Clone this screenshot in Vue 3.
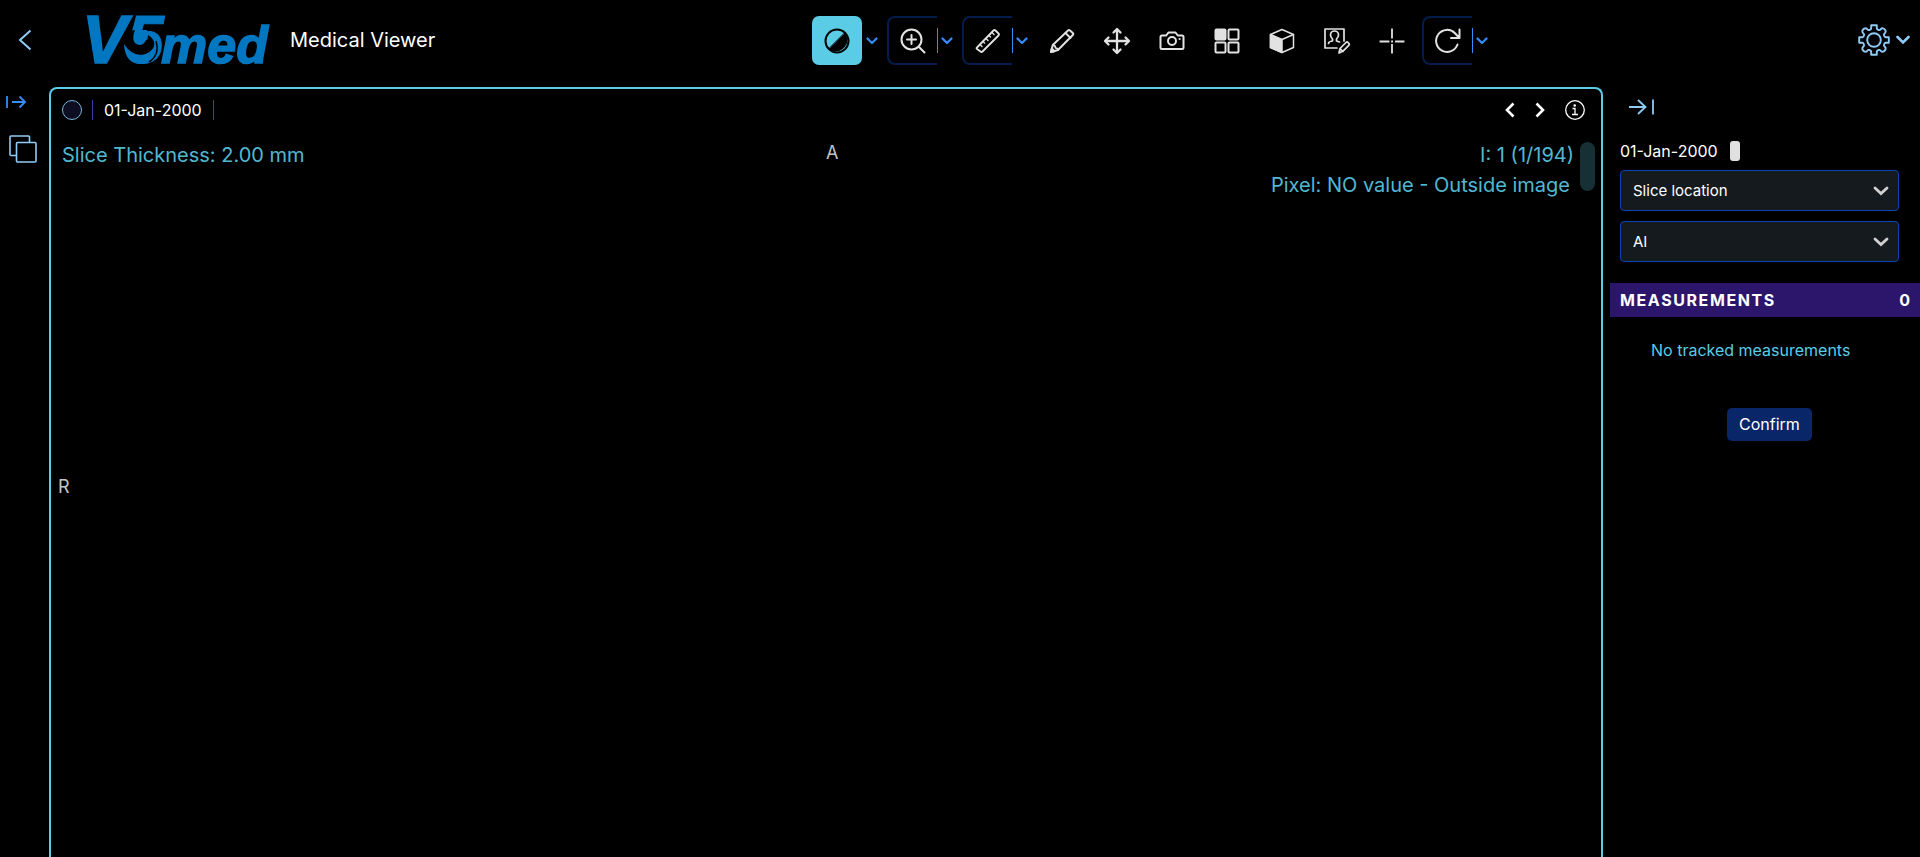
<script setup>
import { ref } from 'vue'

const active = ref('window')
const tools = [
  { id: 'window', label: 'Window level', menu: true },
  { id: 'zoom', label: 'Zoom', menu: true, split: true },
  { id: 'measure', label: 'Measure', menu: true, split: true },
  { id: 'pencil', label: 'Annotate' },
  { id: 'pan', label: 'Pan' },
  { id: 'camera', label: 'Capture' },
  { id: 'layout', label: 'Layout' },
  { id: 'cube', label: 'MPR' },
  { id: 'report', label: 'Report' },
  { id: 'cross', label: 'Crosshairs' },
  { id: 'reset', label: 'Reset', menu: true, split: true }
]
const filters = [
  { id: 'slice', label: 'Series order', value: 'Slice location' },
  { id: 'ai', label: 'Analysis', value: 'AI' }
]
</script>

<template>
  <div class="app">
    <header class="topbar">
      <div class="brand">
        <button class="plain back" aria-label="Back">
          <svg width="16" height="24" viewBox="0 0 16 24"><path d="M12.500 2.500 2 12l10.500 9.500" stroke="#8fcbf7" stroke-width="2" fill="none" /></svg>
        </button>
        <svg class="logo" width="196" height="80" viewBox="-8 -14 196 80">
          <g fill="#0277c1" font-family="Liberation Sans, sans-serif" font-weight="bold" font-style="italic">
            <g stroke="#0277c1" stroke-width="1.500">
              <text x="-6" y="49" font-size="68">V</text>
              <text x="73" y="49" font-size="52">med</text>
            </g>
            <text x="38" y="49" font-size="68" stroke="#0277c1" stroke-width="1">5</text>
          </g>
          <path d="M34 23Q40 16 49 16Q45 29 52 31Q60 30 60 21Q70 27 64 37Q56 45 44 42Q35 37 34 23Z" fill="#000" />
          <path d="M47 16H59Q60 29 53 31Q43 31 46 19Z" fill="#0277c1" />
          <path d="M36 30Q37 51 55 50Q66 49 68 30Q63 40 53 41Q43 41 36 30Z" fill="#0277c1" />
          <path d="M61 48Q72 41 68 27" fill="none" stroke="#000" stroke-width="1.500" />
        </svg>
        <h1>Medical Viewer</h1>
      </div>

      <nav class="toolbar" aria-label="Tools">
        <div v-for="t in tools" :key="t.id" class="group">
          <button class="plain tool" :class="{ on: active === t.id, split: t.split }" :aria-label="t.label" @click="active = t.id">
            <svg width="28" height="28" viewBox="0 0 28 28" fill="none" stroke="currentColor" stroke-width="2" stroke-linecap="round" stroke-linejoin="round">
              <template v-if="t.id === 'window'">
                <circle cx="14" cy="14" r="11.500" />
                <path d="M22 6A11.500 11.500 0 0 1 6 22Z" fill="currentColor" stroke-width="1" />
              </template>
              <template v-else-if="t.id === 'zoom'">
                <circle cx="12.500" cy="12.500" r="10" /><path d="M12.500 8v9M8 12.500h9M20 20l5.500 5.500" />
              </template>
              <template v-else-if="t.id === 'measure'">
                <path d="M3 20.500 19.500 3.500q1-1 2 0l3 3q1 1 0 2L8.500 24.500q-1 1-2 0L3 22q-1-.7 0-1.500Z" stroke-width="1.800" />
                <path d="m6 17.500 2 2M9 14.500l1.500 1.500M12 11.500l2 2M15 8.500l1.500 1.500M18 5.500l2 2" stroke-width="1.400" />
              </template>
              <template v-else-if="t.id === 'pencil'">
                <path d="m3 25 1.800-7L20 3.500q1-1 2 0L24.800 6q1 1 0 2L10 23Z" />
                <path d="m17.500 6 5 5M4.800 18l2 .8.8 2.200 1.800.5.600 1.500" stroke-width="1.800" /><path d="m3 25 .8-3.500 2.700 2.700Z" fill="currentColor" />
              </template>
              <template v-else-if="t.id === 'pan'">
                <path d="M14 3v22M3 14h22" stroke-width="2.300" /><path d="m10.500 5.500 3.500-3.500 3.500 3.500M10.500 22.500 14 26l3.500-3.500M5.500 10.500 2 14l3.500 3.500M22.500 10.500 26 14l-3.500 3.500" stroke-width="2.300" />
              </template>
              <template v-else-if="t.id === 'camera'">
                <path d="M4 8.500h4.200L10.500 5.500h7L19.800 8.500H24q1.500 0 1.500 1.500v10.500q0 1.500-1.500 1.500H4q-1.500 0-1.500-1.500V10q0-1.500 1.500-1.500Z" />
                <circle cx="14" cy="14" r="4" /><path d="M21.500 12h.1" />
              </template>
              <template v-else-if="t.id === 'layout'">
                <rect x="2.500" y="2.500" width="10" height="10" rx="1" fill="currentColor" />
                <rect x="15.500" y="2.500" width="10" height="10" rx="1" />
                <rect x="2.500" y="15.500" width="10" height="10" rx="1" />
                <rect x="15.500" y="15.500" width="10" height="10" rx="1" />
              </template>
              <template v-else-if="t.id === 'cube'">
                <path d="M14 2.500 25.500 7.500v13L14 25.500 2.500 20.500v-13Z" stroke-width="1.500" />
                <path d="M14 12.500v13L2.500 20.500v-13Z" fill="currentColor" stroke-width="1.500" /><path d="m14 12.500 11.500-5" stroke-width="1.500" />
              </template>
              <template v-else-if="t.id === 'report'">
                <g stroke-width="1.700">
                  <path d="M14 21H2V2h19v12" />
                  <path d="M5.500 16.500q0-2 4-2.500v-2Q7.500 10 7.500 8a4 4 0 0 1 8 0q0 2-2 4v2l3 1" />
                  <path d="m16 26 1-4.500 6-6q1-1 2 0l.8.8q1 1 0 2l-6 6ZM17 21.500l3 3" />
                </g>
              </template>
              <template v-else-if="t.id === 'cross'">
                <path d="M14 2.500v8M14 18v7.500M2.500 14.500h8M18 14.500h7.500M14 14.500h.1" stroke-width="1.800" stroke-linecap="square" />
              </template>
              <template v-else>
                <path d="M23.500 17.500A11 11 0 1 1 21 6.200l4 4.300M25.500 2.500v8.500H17" />
              </template>
            </svg>
          </button>
          <button v-if="t.menu" class="plain caret" :class="{ line: t.split }" :aria-label="t.label + ' options'">
            <svg width="12" height="8" viewBox="0 0 12 8"><path d="m1.500 1.500 4.500 4.500 4.500-4.500" fill="none" stroke="#348cfd" stroke-width="2.200" stroke-linecap="round" stroke-linejoin="round" /></svg>
          </button>
        </div>
      </nav>

      <button class="plain settings" aria-label="Settings">
        <svg width="32" height="32" viewBox="-16 -16 32 32" fill="none" stroke="#8fcbf7" stroke-width="1.900" stroke-linejoin="round">
          <circle r="6.800" />
          <path d="M-2.800-14.800H2.800V-11.500Q3-10.500 4.500-10Q5.800-9.500 6.800-10.800Q8-12.200 9.500-11.500Q11-10.800 11.500-9.500Q12.200-8 10.800-6.800Q9.500-5.800 10-4.500Q10.500-3 11.500-2.800H14.800V2.800H11.500Q10.500 3 10 4.500Q9.500 5.800 10.800 6.800Q12.200 8 11.500 9.500Q10.800 11 9.500 11.500Q8 12.200 6.800 10.800Q5.800 9.500 4.500 10Q3 10.500 2.800 11.500V14.800H-2.800V11.500Q-3 10.500-4.500 10Q-5.800 9.500-6.800 10.800Q-8 12.200-9.500 11.500Q-10.800 11-11.500 9.500Q-12.200 8-10.800 6.800Q-9.500 5.800-10 4.500Q-10.500 3-11.500 2.800H-14.800V-2.800H-11.500Q-10.500-3-10-4.500Q-9.500-5.800-10.800-6.800Q-12.200-8-11.500-9.500Q-10.800-11-9.500-11.500Q-8-12.200-6.800-10.800Q-5.800-9.500-4.500-10Q-3-10.500-2.800-11.500Z" />
        </svg>
        <svg width="14" height="10" viewBox="0 0 14 10"><path d="m1.500 2 5.500 5.500L12.500 2" fill="none" stroke="#8fcbf7" stroke-width="2.600" stroke-linecap="round" /></svg>
      </button>
    </header>

    <div class="body">
      <aside class="rail">
        <button class="plain" aria-label="Expand studies">
          <svg width="22" height="14" viewBox="0 0 22 14"><path d="M2 1v12M7 7h13M14.500 1.500 20 7l-5.500 5.500" fill="none" stroke="#348cfd" stroke-width="1.800" /></svg>
        </button>
        <button class="plain stack" aria-label="Studies">
          <svg width="28" height="28" viewBox="0 0 28 28" fill="none" stroke="#8fcbf7" stroke-width="1.600"><path d="M7.500 20.500H2q-1 0-1-1V2q0-1 1-1h17.500q1 0 1 1v5.500" /><rect x="7.500" y="7.500" width="19.500" height="19.500" rx="1" /></svg>
        </button>
      </aside>

      <main class="viewport">
        <div class="viewbar">
          <span class="status"></span>
          <span class="date">01-Jan-2000</span>
          <div class="viewnav">
            <button class="plain" aria-label="Previous"><svg width="12" height="16" viewBox="0 0 12 16"><path d="M9.500 1.500 3 8l6.500 6.500" fill="none" stroke="#fff" stroke-width="2.600" /></svg></button>
            <button class="plain" aria-label="Next"><svg width="12" height="16" viewBox="0 0 12 16"><path d="M2.500 1.500 9 8l-6.500 6.500" fill="none" stroke="#fff" stroke-width="2.600" /></svg></button>
            <button class="plain" aria-label="Information"><svg width="22" height="22" viewBox="0 0 22 22" fill="none" stroke="#fff" stroke-width="1.300"><circle cx="11" cy="11" r="9.300" /><path d="M8.500 9.500H11V15.500M8 15.500h6" /><circle cx="10.700" cy="6.500" r=".7" fill="#fff" /></svg></button>
          </div>
        </div>
        <div class="image">
          <p>Slice Thickness: 2.00 mm</p>
          <div class="right">
            <p class="index">I: 1 (1/194)</p>
            <p>Pixel: NO value - Outside image</p>
          </div>
          <div class="scroll"></div>
          <span class="mark top">A</span>
          <span class="mark left">R</span>
        </div>
      </main>

      <aside class="panel">
        <button class="plain collapse" aria-label="Collapse panel">
          <svg width="28" height="18" viewBox="0 0 28 18"><path d="M1 9h17M10 2l7.500 7-7.500 7M25 1.500v15" fill="none" stroke="#8fcbf7" stroke-width="1.800" /></svg>
        </button>
        <div class="study"><span>01-Jan-2000</span><span class="chip"></span></div>
        <div v-for="f in filters" :key="f.id" class="field">
          <select :id="f.id" :aria-label="f.label"><option>{{ f.value }}</option></select>
          <svg width="16" height="10" viewBox="0 0 16 10"><path d="M2 2l6 5.500L14 2" fill="none" stroke="#d0d0d0" stroke-width="2.800" stroke-linecap="round" /></svg>
        </div>
        <h2><span>MEASUREMENTS</span><span>0</span></h2>
        <p class="empty">No tracked measurements</p>
        <button class="confirm">Confirm</button>
      </aside>
    </div>
  </div>
</template>

<style>
body { background: #000; }
</style>

<style scoped>
* { box-sizing: border-box; }
.app {
  display: flex;
  flex-direction: column;
  min-height: 100vh;
  background: #000;
  color: #fff;
  font-family: Inter, "Liberation Sans", sans-serif;
  font-size: 16px;
  line-height: 24px;
}
h1, h2, p { margin: 0; font-weight: 400; }
svg { display: block; flex: none; }
.plain {
  padding: 0;
  border: 0;
  background: none;
  color: inherit;
  cursor: pointer;
}
.topbar {
  display: flex;
  align-items: center;
  justify-content: space-between;
  height: 81px;
  padding: 0 10px 1px 18px;
}
.brand { display: flex; align-items: center; width: 427px; }
.logo { margin-left: 46px; }
h1 { margin-left: 14px; font-size: 20px; line-height: 28px; white-space: nowrap; }
.toolbar { display: flex; gap: 5px; padding-top: 1px; }
.group { display: flex; align-items: center; }
.tool {
  display: flex;
  align-items: center;
  justify-content: center;
  width: 50px;
  height: 49px;
  color: #e2e2e2;
}
.tool.on { border-radius: 7px; background: #5acce6; color: #000; }
.tool.split:not(.on) {
  border: 2px solid #041c4a;
  border-right: 0;
  border-radius: 8px 0 0 8px;
}
.caret {
  display: flex;
  align-items: center;
  justify-content: center;
  width: 20px;
  height: 25px;
}
.caret.line { border-left: 1px solid #348cfd; }
.settings { display: flex; align-items: center; gap: 6px; }
.body { display: flex; flex: 1; }
.rail {
  display: flex;
  flex-direction: column;
  gap: 26px;
  width: 49px;
  padding: 14px 0 0 5px;
  align-items: flex-start;
}
.stack { margin-left: 4px; }
.viewport {
  display: flex;
  flex: 1;
  flex-direction: column;
  margin: 6px 7px 0 0;
  border: 2px solid #5acce6;
  border-bottom: 0;
  border-radius: 8px 8px 0 0;
}
.viewbar {
  display: flex;
  align-items: center;
  height: 42px;
  padding: 0 15px 0 11px;
}
.status {
  width: 20px;
  height: 20px;
  margin-right: 10px;
  border: 1px solid #79b5d4;
  border-radius: 50%;
  background: #0e0e22;
}
.date {
  padding: 0 11px;
  border: solid #3a3f99;
  border-width: 0 1px;
  line-height: 20px;
}
.viewnav { display: flex; align-items: center; gap: 18px; margin-left: auto; }
.image {
  position: relative;
  display: flex;
  flex: 1;
  justify-content: space-between;
  padding: 9px 31px 0 11px;
  color: #5acce6;
  font-size: 20px;
  line-height: 30px;
}
.image p { opacity: .9; }
.right { text-align: right; }
.index { margin-right: -4px; }
.scroll {
  position: absolute;
  top: 11px;
  right: 6px;
  width: 15px;
  height: 49px;
  border-radius: 8px;
  background: #163035;
}
.mark { position: absolute; color: #c4c4c4; font-size: 18px; line-height: 24px; }
.top { top: 10px; left: 50%; }
.left { top: 49%; left: 7px; transform: translateY(-50%); }
.panel { width: 310px; padding-top: 17px; }
.collapse { display: block; margin-left: 18px; }
.study { display: flex; align-items: center; gap: 12px; margin: 23px 10px 7px; }
.chip { width: 10px; height: 20px; border-radius: 3px; background: #e0e0e0; }
.field {
  position: relative;
  display: flex;
  align-items: center;
  margin: 0 21px 10px 10px;
}
.field svg { position: absolute; right: 10px; pointer-events: none; }
select {
  width: 100%;
  height: 41px;
  padding: 0 12px;
  appearance: none;
  border: 1px solid #0944b3;
  border-radius: 4px;
  background: #151a1f;
  color: #fff;
  font: 15px Inter, "Liberation Sans", sans-serif;
}
h2 {
  display: flex;
  justify-content: space-between;
  margin-top: 21px;
  padding: 5px 10px;
  background: #2c166b;
  font-size: 16px;
  font-weight: 700;
}
h2 span:first-child { letter-spacing: 0.1em; }
.empty { margin: 21px 0 0 41px; color: #5acce6; }
.confirm {
  display: block;
  margin: 46px auto 0 117px;
  padding: 4px 12px;
  border: 0;
  border-radius: 5px;
  background: #092669;
  color: #fff;
  font: 16px/25px Inter, "Liberation Sans", sans-serif;
}
</style>
